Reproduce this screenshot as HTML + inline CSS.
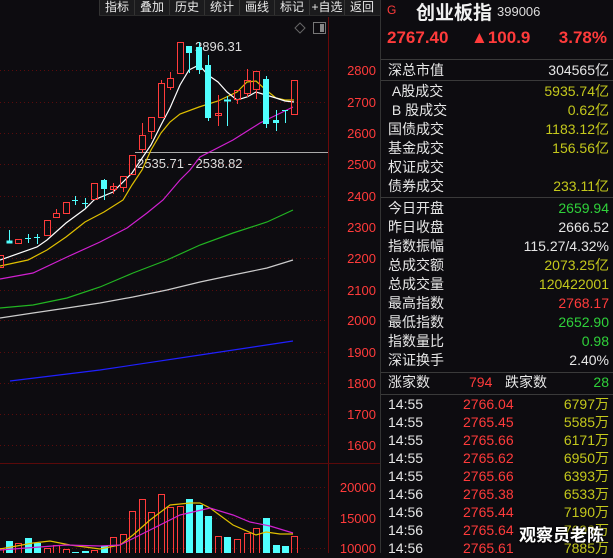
<!DOCTYPE html>
<html><head><meta charset="utf-8"><style>
*{margin:0;padding:0;box-sizing:border-box}
body{width:613px;height:553px;overflow:hidden;background:#0d0c10;font-family:"Liberation Sans","Noto Sans CJK SC",sans-serif;position:relative}
.tb{position:absolute;top:0;left:99px;height:16px;width:281px;background:#1b1b1d;display:flex;border-bottom:1px solid #2a2a2a}
.tb div{width:35px;border-left:1px solid #333;color:#e8e8e8;font-size:12px;line-height:15px;text-align:center}
.rp{position:absolute;left:380px;top:0;width:233px;height:553px;border-left:1px solid #333;color:#e6e6e6}
.r{position:absolute;left:7px;right:4px;height:19px;font-size:14px;line-height:19px}
.r .v{position:absolute;right:0;top:0}
.hl{position:absolute;left:0;right:0;height:1px;background:#3a3a3a}
.g{color:#2fd13a}.y{color:#c4c81c}.rd{color:#ff3b3b}
svg{position:absolute;left:0;top:0}
</style></head><body>
<svg width="380" height="553">
<g stroke="#5a0c0c" stroke-width="1" stroke-dasharray="1 3">
<line x1="0" y1="70.5" x2="328" y2="70.5"/><line x1="0" y1="102.5" x2="328" y2="102.5"/><line x1="0" y1="133.5" x2="328" y2="133.5"/><line x1="0" y1="164.5" x2="328" y2="164.5"/><line x1="0" y1="196.5" x2="328" y2="196.5"/><line x1="0" y1="227.5" x2="328" y2="227.5"/><line x1="0" y1="258.5" x2="328" y2="258.5"/><line x1="0" y1="290.5" x2="328" y2="290.5"/><line x1="0" y1="320.5" x2="328" y2="320.5"/><line x1="0" y1="352.5" x2="328" y2="352.5"/><line x1="0" y1="383.5" x2="328" y2="383.5"/><line x1="0" y1="414.5" x2="328" y2="414.5"/><line x1="0" y1="445.5" x2="328" y2="445.5"/><line x1="0" y1="487.5" x2="328" y2="487.5"/><line x1="0" y1="518.5" x2="328" y2="518.5"/><line x1="0" y1="548.5" x2="328" y2="548.5"/>
</g>
<line x1="328.5" y1="17" x2="328.5" y2="553" stroke="#6a0a0a"/>
<line x1="0" y1="463.5" x2="380" y2="463.5" stroke="#5a0a0a"/>
<g fill="#ff3b3b" font-size="13" text-anchor="end">
<text x="376" y="75">2800</text><text x="376" y="107">2700</text><text x="376" y="138">2600</text><text x="376" y="169">2500</text><text x="376" y="201">2400</text><text x="376" y="232">2300</text><text x="376" y="263">2200</text><text x="376" y="295">2100</text><text x="376" y="325">2000</text><text x="376" y="357">1900</text><text x="376" y="388">1800</text><text x="376" y="419">1700</text><text x="376" y="450">1600</text><text x="376" y="492">20000</text><text x="376" y="523">15000</text><text x="376" y="553">10000</text>
</g>
<path d="M300 23 L305 28 L300 33 L295 28Z" fill="none" stroke="#666"/>
<rect x="313.5" y="22.5" width="12" height="11" fill="none" stroke="#777"/><rect x="320" y="24" width="4" height="8" fill="#888"/>
<line x1="135" y1="152.5" x2="328" y2="152.5" stroke="#aaa"/>
<text x="137" y="168" fill="#ddd" font-size="13">2535.71 - 2538.82</text>
<text x="195" y="51" fill="#ddd" font-size="13">2896.31</text>
<g fill="none" stroke-width="1.2">
<polyline stroke="#2020ff" points="10,381 100,370 200,355 293,341"/>
<polyline stroke="#cccccc" points="0,318 33,313 67,308 100,303 133,297 167,290 200,282 233,275 267,268 293,260"/>
<polyline stroke="#22b522" points="0,308 33,305 67,298 100,287 133,273 167,260 200,245 233,233 267,222 293,210"/>
<polyline stroke="#d020d0" points="0,279 33,273 67,257 100,242 127,228 147,213 163,200 180,180 190,170 200,157 233,140 260,123 293,107"/>
<polyline stroke="#e0c000" points="0,266 28,260 47,250 66,237 85,222 104,212 123,200 132,185 142,170 151,150 161,133 170,122 180,114 199,107 218,101 237,92 247,82 256,81 266,90 276,98 285,100 294,100"/>
<polyline stroke="#ffffff" points="0,260 37,247 47,240 66,223 85,209 94,200 113,192 132,173 151,145 161,125 170,108 180,85 189,70 199,65 208,75 218,82 227,92 237,100 247,97 256,92 266,95 276,98 285,101 294,102"/>
</g>
<g stroke="#ff3b3b" fill="none">
<rect x="-2.5" y="255.5" width="6" height="12"/>
<rect x="15.5" y="239.5" width="6" height="4"/>
<rect x="44.5" y="220.5" width="6" height="15"/><rect x="53.5" y="213.5" width="6" height="4"/><line x1="56.5" y1="209" x2="56.5" y2="213"/>
<rect x="63.5" y="202.5" width="6" height="11"/>
<rect x="91.5" y="183.5" width="6" height="16"/>
<rect x="110.5" y="186.5" width="6" height="3"/><line x1="113.5" y1="183" x2="113.5" y2="194"/>
<rect x="120.5" y="176.5" width="6" height="11"/><line x1="123.5" y1="187" x2="123.5" y2="192"/>
<rect x="129.5" y="155.5" width="6" height="19"/>
<rect x="139.5" y="135.5" width="6" height="14"/><line x1="142.5" y1="123" x2="142.5" y2="135"/><line x1="142.5" y1="150" x2="142.5" y2="153"/>
<rect x="148.5" y="117.5" width="6" height="14"/><line x1="151.5" y1="131" x2="151.5" y2="139"/>
<rect x="158.5" y="83.5" width="6" height="34"/><line x1="161.5" y1="80" x2="161.5" y2="83"/>
<rect x="167.5" y="78.5" width="6" height="9"/><line x1="170.5" y1="72" x2="170.5" y2="78"/><line x1="170.5" y1="87" x2="170.5" y2="90"/>
<rect x="177.5" y="42.5" width="6" height="31"/>
<rect x="215.5" y="113.5" width="6" height="2"/><line x1="218.5" y1="95" x2="218.5" y2="126"/>
<rect x="234.5" y="90.5" width="6" height="9"/><line x1="237.5" y1="99" x2="237.5" y2="104"/>
<rect x="244.5" y="80.5" width="6" height="13"/><line x1="247.5" y1="69" x2="247.5" y2="80"/><line x1="247.5" y1="93" x2="247.5" y2="97"/>
<rect x="253.5" y="71.5" width="6" height="18"/><line x1="256.5" y1="89" x2="256.5" y2="99"/>
<rect x="291.5" y="80.5" width="6" height="34"/>
</g>
<g fill="#50ffff" stroke="#50ffff">
<rect x="6.5" y="240.5" width="6" height="3" stroke="none"/><line x1="9.5" y1="230" x2="9.5" y2="242"/>
<line x1="25" y1="238.5" x2="31" y2="238.5"/><line x1="28.5" y1="234" x2="28.5" y2="243"/>
<line x1="34" y1="237.5" x2="40" y2="237.5"/><line x1="37.5" y1="234" x2="37.5" y2="244"/>
<line x1="72" y1="200.5" x2="78" y2="200.5"/><line x1="75.5" y1="196" x2="75.5" y2="205"/>
<line x1="82" y1="203.5" x2="88" y2="203.5"/><line x1="85.5" y1="198" x2="85.5" y2="208"/>
<rect x="101" y="180" width="6" height="9" stroke="none"/><line x1="104.5" y1="179" x2="104.5" y2="200"/>
<rect x="186" y="46" width="6" height="7" stroke="none"/><line x1="189.5" y1="52" x2="189.5" y2="73"/>
<rect x="196" y="47" width="6" height="23" stroke="none"/><line x1="199.5" y1="42" x2="199.5" y2="74"/>
<rect x="205" y="65" width="6" height="53" stroke="none"/><line x1="208.5" y1="55" x2="208.5" y2="121"/>
<line x1="224" y1="100.5" x2="231" y2="100.5" stroke-width="2"/><line x1="227.5" y1="96" x2="227.5" y2="126"/>
<rect x="263" y="79" width="6" height="45" stroke="none"/><line x1="266.5" y1="76" x2="266.5" y2="128"/>
<rect x="273" y="120" width="6" height="3" stroke="none"/><line x1="276.5" y1="110" x2="276.5" y2="131"/>
<line x1="282" y1="110.5" x2="288" y2="110.5"/><line x1="285.5" y1="110" x2="285.5" y2="123"/>
</g>
<g stroke="#ff3b3b" fill="none">
<rect x="-2.5" y="548.5" width="6" height="6"/><rect x="15.5" y="543.5" width="6" height="12"/><rect x="44.5" y="548.5" width="6" height="6"/><rect x="53.5" y="545.5" width="6" height="9"/><rect x="63.5" y="549.5" width="6" height="6"/><rect x="91.5" y="550.5" width="6" height="6"/><rect x="110.5" y="537.5" width="6" height="18"/><rect x="120.5" y="534.5" width="6" height="20"/><rect x="129.5" y="511.5" width="6" height="44"/><rect x="139.5" y="499.5" width="6" height="56"/><rect x="148.5" y="512.5" width="6" height="44"/><rect x="158.5" y="494.5" width="6" height="60"/><rect x="167.5" y="507.5" width="6" height="48"/><rect x="177.5" y="506.5" width="6" height="50"/><rect x="215.5" y="536.5" width="6" height="20"/><rect x="234.5" y="539.5" width="6" height="16"/><rect x="244.5" y="533.5" width="6" height="22"/><rect x="253.5" y="528.5" width="6" height="28"/><rect x="291.5" y="536.5" width="6" height="20"/>
</g>
<g fill="#50ffff">
<rect x="6" y="541" width="7" height="12"/><rect x="25" y="538" width="7" height="15"/><rect x="34" y="543" width="7" height="10"/><rect x="72" y="552" width="7" height="1"/><rect x="82" y="551" width="7" height="2"/><rect x="101" y="546" width="7" height="7"/><rect x="186" y="499" width="7" height="54"/><rect x="196" y="505" width="7" height="48"/><rect x="205" y="516" width="7" height="37"/><rect x="224" y="537" width="7" height="16"/><rect x="263" y="518" width="7" height="35"/><rect x="273" y="545" width="7" height="8"/><rect x="282" y="546" width="7" height="7"/>
</g>
<g fill="none" stroke-width="1.2">
<polyline stroke="#e0c000" points="0,549 33,543 50,541 70,545 100,549 120,545 133,535 150,520 170,505 190,503 200,503 210,508 233,525 256,535 266,532 280,534 293,534"/>
<polyline stroke="#d020d0" points="0,550 66,545 100,546 120,545 150,530 180,515 210,508 233,515 250,522 270,526 293,533"/>
</g>
</svg>
<div class="tb"><div>指标</div><div>叠加</div><div>历史</div><div>统计</div><div>画线</div><div>标记</div><div>+自选</div><div>返回</div></div>
<div class="rp">
<div style="position:absolute;left:6px;top:3px;color:#ff3b3b;font-size:12px">G</div>
<div style="position:absolute;left:35px;top:-2px;font-size:19px;font-weight:bold;color:#f0f0f0">创业板指</div>
<div style="position:absolute;left:116px;top:4px;font-size:13px;color:#ddd">399006</div>
<div style="position:absolute;left:6px;top:28px;font-size:17px;font-weight:bold;color:#ff3b3b">2767.40</div>
<div style="position:absolute;left:90px;top:28px;font-size:17px;font-weight:bold;color:#ff3b3b">▲100.9</div>
<div style="position:absolute;right:6px;top:28px;font-size:17px;font-weight:bold;color:#ff3b3b">3.78%</div>
<div class="hl" style="top:59px"></div>
<div class="r" style="top:61px">深总市值<span class="v">304565亿</span></div>
<div class="hl" style="top:80px"></div>
<div class="r" style="top:82px">&nbsp;A股成交<span class="v y">5935.74亿</span></div>
<div class="r" style="top:101px">&nbsp;B 股成交<span class="v y">0.62亿</span></div>
<div class="r" style="top:120px">国债成交<span class="v y">1183.12亿</span></div>
<div class="r" style="top:139px">基金成交<span class="v y">156.56亿</span></div>
<div class="r" style="top:158px">权证成交</div>
<div class="r" style="top:177px">债券成交<span class="v y">233.11亿</span></div>
<div class="hl" style="top:197px"></div>
<div class="r" style="top:199px">今日开盘<span class="v g">2659.94</span></div>
<div class="r" style="top:218px">昨日收盘<span class="v">2666.52</span></div>
<div class="r" style="top:237px">指数振幅<span class="v">115.27/4.32%</span></div>
<div class="r" style="top:256px">总成交额<span class="v y">2073.25亿</span></div>
<div class="r" style="top:275px">总成交量<span class="v y">120422001</span></div>
<div class="r" style="top:294px">最高指数<span class="v rd">2768.17</span></div>
<div class="r" style="top:313px">最低指数<span class="v g">2652.90</span></div>
<div class="r" style="top:332px">指数量比<span class="v g">0.98</span></div>
<div class="r" style="top:351px">深证换手<span class="v">2.40%</span></div>
<div class="hl" style="top:372px"></div>
<div class="r" style="top:373px">涨家数<span style="position:absolute;left:81px" class="rd">794</span><span style="position:absolute;left:117px">跌家数</span><span class="v g">28</span></div>
<div class="hl" style="top:394px"></div>
<div class="r" style="top:395px">14:55<span style="position:absolute;left:75px" class="rd">2766.04</span><span class="v y">6797万</span></div>
<div class="r" style="top:413px">14:55<span style="position:absolute;left:75px" class="rd">2765.45</span><span class="v y">5585万</span></div>
<div class="r" style="top:431px">14:55<span style="position:absolute;left:75px" class="rd">2765.66</span><span class="v y">6171万</span></div>
<div class="r" style="top:449px">14:55<span style="position:absolute;left:75px" class="rd">2765.62</span><span class="v y">6950万</span></div>
<div class="r" style="top:467px">14:55<span style="position:absolute;left:75px" class="rd">2765.66</span><span class="v y">6393万</span></div>
<div class="r" style="top:485px">14:56<span style="position:absolute;left:75px" class="rd">2765.38</span><span class="v y">6533万</span></div>
<div class="r" style="top:503px">14:56<span style="position:absolute;left:75px" class="rd">2765.44</span><span class="v y">7190万</span></div>
<div class="r" style="top:521px">14:56<span style="position:absolute;left:75px" class="rd">2765.64</span><span class="v y">7690万</span></div>
<div class="r" style="top:539px">14:56<span style="position:absolute;left:75px" class="rd">2765.61</span><span class="v y">7885万</span></div>
<div style="position:absolute;left:138px;top:521px;font-size:17px;font-weight:bold;color:#fff;text-shadow:0 0 2px #000,0 0 2px #000">观察员老陈</div>
</div>
</body></html>
